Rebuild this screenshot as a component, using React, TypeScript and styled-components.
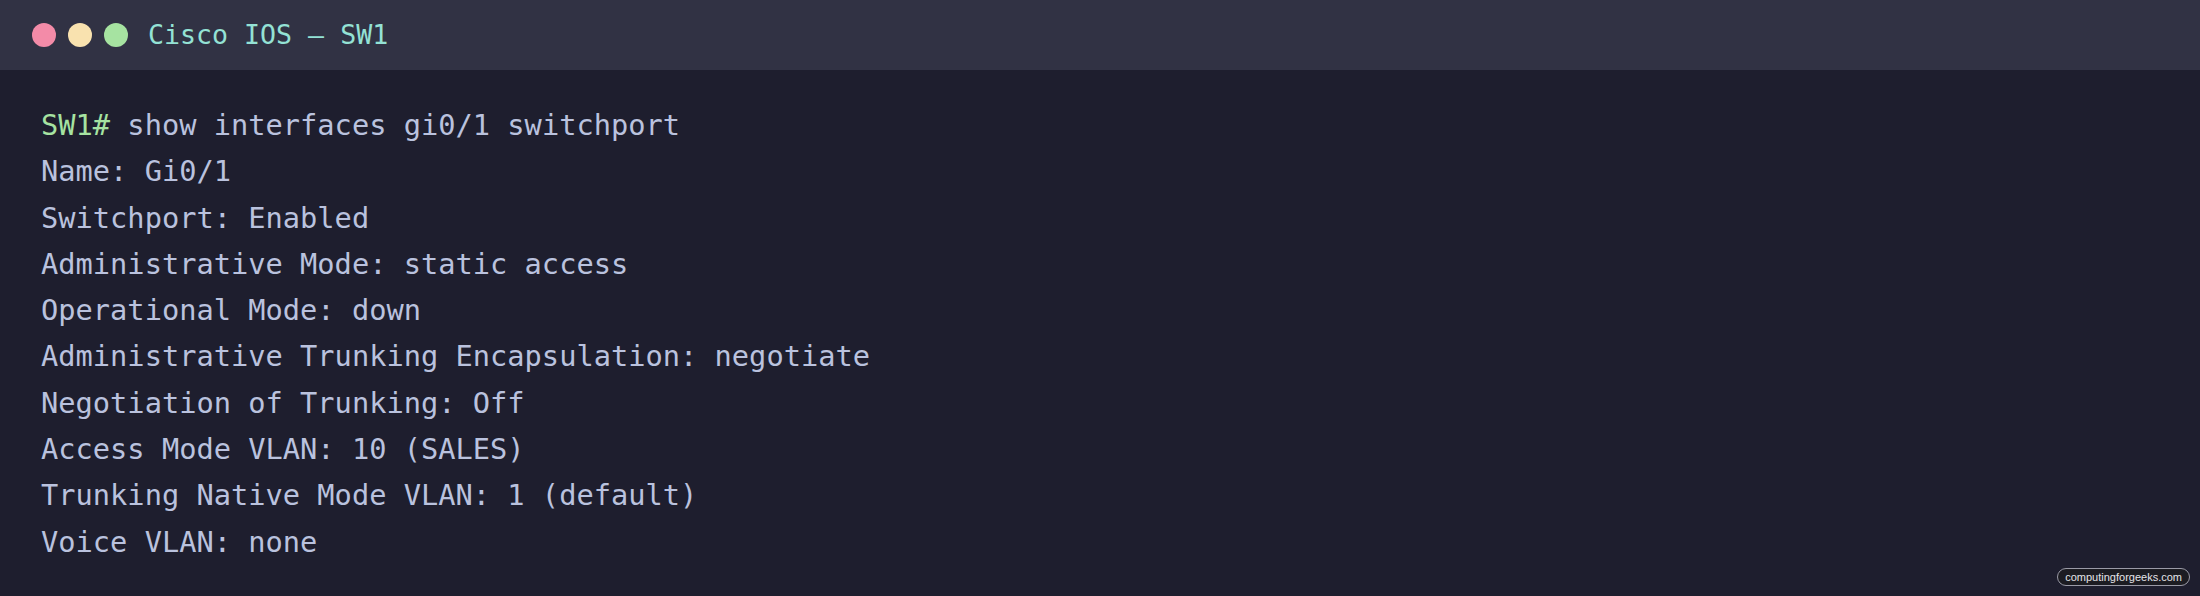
import React from "react";
import styled, { createGlobalStyle } from "styled-components";

const Global = createGlobalStyle`
  html, body { margin: 0; padding: 0; background: #1e1e2e; }
  body { width: 2200px; height: 596px; overflow: hidden; }
`;

const Window = styled.div`
  position: relative;
  width: 2200px;
  height: 596px;
  background: #1e1e2e;
  display: flex;
  flex-direction: column;
`;

const TitleBar = styled.div`
  height: 70px;
  background: #313244;
  display: flex;
  align-items: center;
  padding-left: 32px;
  box-sizing: border-box;
`;

const Dots = styled.div`
  display: flex;
  gap: 12px;
  margin-right: 20px;
`;

const Dot = styled.span<{ $c: string }>`
  width: 24px;
  height: 24px;
  border-radius: 50%;
  background: ${(p) => p.$c};
`;

const Title = styled.span`
  font-family: "DejaVu Sans Mono", "Liberation Mono", monospace;
  font-size: 26.6px;
  color: #94e2d5;
  line-height: 1;
`;

const Body = styled.pre`
  margin: 0;
  padding: 32px 0 0 41px;
  font-family: "DejaVu Sans Mono", "Liberation Mono", monospace;
  font-size: 28.7px;
  line-height: 46.3px;
  color: #bac2de;
`;

const Line = styled.div``;

const Prompt = styled.span`
  color: #a6e3a1;
`;

const Badge = styled.div`
  position: absolute;
  right: 10px;
  bottom: 10px;
  height: 18px;
  padding: 0 7px;
  border: 1px solid #9a9aa6;
  border-radius: 9px;
  background: #1c1c22;
  color: #e4e4e8;
  font-family: "Liberation Sans", Arial, sans-serif;
  font-size: 11px;
  line-height: 18px;
  box-sizing: border-box;
  display: flex;
  align-items: center;
`;

const lines = [
  "Name: Gi0/1",
  "Switchport: Enabled",
  "Administrative Mode: static access",
  "Operational Mode: down",
  "Administrative Trunking Encapsulation: negotiate",
  "Negotiation of Trunking: Off",
  "Access Mode VLAN: 10 (SALES)",
  "Trunking Native Mode VLAN: 1 (default)",
  "Voice VLAN: none",
];

export default function App() {
  return (
    <>
      <Global />
      <Window>
        <TitleBar>
          <Dots>
            <Dot $c="#f38ba8" />
            <Dot $c="#f9e2af" />
            <Dot $c="#a6e3a1" />
          </Dots>
          <Title>Cisco IOS — SW1</Title>
        </TitleBar>
        <Body>
          <Line>
            <Prompt>SW1#</Prompt> show interfaces gi0/1 switchport
          </Line>
          {lines.map((l) => (
            <Line key={l}>{l}</Line>
          ))}
        </Body>
        <Badge>computingforgeeks.com</Badge>
      </Window>
    </>
  );
}
